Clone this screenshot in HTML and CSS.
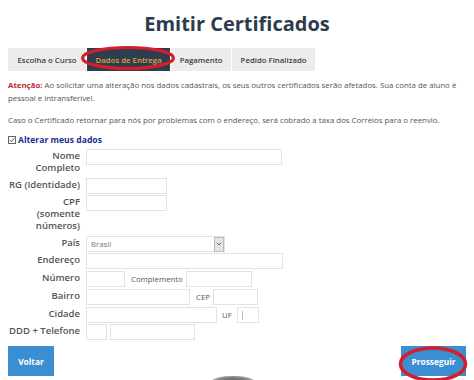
FILE: index.html
```html
<!DOCTYPE html>
<html lang="pt-BR">
<head>
<meta charset="utf-8">
<title>Emitir Certificados</title>
<link rel="stylesheet" href="styles.css">
</head>
<body>
<div class="page">
  <h1 class="title">Emitir Certificados</h1>
  <nav class="tabs">
    <span class="tab">Escolha o Curso</span>
    <span class="tab active">Dados de Entrega</span>
    <span class="tab">Pagamento</span>
    <span class="tab">Pedido Finalizado</span>
  </nav>
  <p class="note"><strong class="warn">Atenção:</strong> Ao solicitar uma alteração nos dados cadastrais, os seus outros certificados serão afetados. Sua conta de aluno é pessoal e intransferível.</p>
  <p class="note">Caso o Certificado retornar para nós por problemas com o endereço, será cobrado a taxa dos Correios para o reenvio.</p>
  <div class="toggle">
    <svg class="check" width="8" height="8" viewBox="0 0 8 8"><rect x="0.5" y="0.5" width="7" height="7" fill="#fff" stroke="#666" stroke-width="1"/><path d="M1.8 4.2 L3.3 5.7 L6.3 2.2" fill="none" stroke="#444" stroke-width="1"/></svg>
    <span>Alterar meus dados</span>
  </div>
  <form class="form">
    <div class="row"><label class="lbl">Nome<br>Completo</label><input class="in w-nome"></div>
    <div class="row"><label class="lbl">RG (Identidade)</label><input class="in w-rg"></div>
    <div class="row"><label class="lbl">CPF<br>(somente<br>números)</label><input class="in w-rg"></div>
    <div class="row"><label class="lbl">País</label><div class="select"><span>Brasil</span><span class="arrow"><svg width="6" height="4" viewBox="0 0 6 4"><path d="M0.8 0.8 L3 3 L5.2 0.8" fill="none" stroke="#555" stroke-width="0.9"/></svg></span></div></div>
    <div class="row r18"><label class="lbl">Endereço</label><input class="in w-end"></div>
    <div class="row r18"><label class="lbl">Número</label><input class="in w-num"><span class="sub">Complemento</span><input class="in w-comp"></div>
    <div class="row r18"><label class="lbl">Bairro</label><input class="in w-bairro"><span class="sub">CEP</span><input class="in w-cep"></div>
    <div class="row"><label class="lbl">Cidade</label><input class="in w-cid"><span class="sub sub-uf">UF</span><span class="in w-uf caret"></span></div>
    <div class="row"><label class="lbl">DDD + Telefone</label><input class="in w-ddd"><input class="in w-tel"></div>
  </form>
  <div class="actions">
    <button class="btn btn-back" type="button">Voltar</button>
    <button class="btn btn-next" type="button">Prosseguir</button>
  </div>
</div>
<svg class="mark mark-tab" width="100" height="30" viewBox="0 0 100 30"><ellipse cx="48" cy="14" rx="45.5" ry="10.5" fill="none" stroke="#d41f2a" stroke-width="3.2"/></svg>
<svg class="mark mark-btn" width="80" height="44" viewBox="0 0 80 44"><ellipse cx="35" cy="20" rx="32.5" ry="16" fill="none" stroke="#d41f2a" stroke-width="3.6"/></svg>
<div class="shade"></div>
</body>
</html>
```
FILE: styles.css
```css
* { box-sizing: border-box; }
html, body { margin: 0; padding: 0; background: #fff; }
body {
  font-family: "Open Sans", "DejaVu Sans", sans-serif;
  color: #555;
  width: 474px;
  height: 380px;
  overflow: hidden;
  position: relative;
}
.page { padding: 12px 8px 0 8px; }
.title {
  margin: 0;
  text-align: center;
  font-size: 20px;
  line-height: 24px;
  font-weight: 700;
  color: #2d3b4c;
}
.tabs {
  display: flex;
  margin-top: 12px;
  height: 23px;
}
.tab {
  display: flex;
  align-items: center;
  padding: 0 8.5px;
  background: #ececec;
  border-right: 1px solid #fff;
  font-size: 7.8px;
  font-weight: 600;
  color: #3d3d3d;
  white-space: nowrap;
}
.tab:first-child { padding: 0 9.5px; }
.tab.active { background: #2f3d4e; color: #dba445; }
.note {
  margin: 8px 0 9px;
  font-size: 7.85px;
  line-height: 13px;
  color: #555;
}
.note + .note { margin: 0; }
.warn { color: #c0282d; font-weight: 700; }
.toggle {
  display: flex;
  align-items: center;
  gap: 2px;
  margin-top: 6px;
  height: 13px;
  font-size: 8.6px;
  font-weight: 700;
  color: #1e2d8f;
}
.form { margin-top: 3px; display: flex; flex-direction: column; }
.row {
  display: flex;
  align-items: flex-start;
  min-height: 17px;
}
.r18 { min-height: 18px; }
.lbl {
  flex: 0 0 72px;
  width: 72px;
  margin-right: 6px;
  text-align: right;
  font-size: 9.5px;
  line-height: 12px;
  font-weight: 600;
  color: #555;
  padding: 1px 0 4px;
  white-space: nowrap;
}
.in {
  display: block;
  flex: none;
  height: 16px;
  border: 1px solid #e2e2e2;
  background: #fff;
  padding: 0;
  margin: 0;
  font: inherit;
}
.w-nome { width: 196px; }
.w-rg { width: 81px; }
.w-end { width: 197px; }
.w-num { width: 39px; }
.w-comp { width: 66px; }
.w-bairro { width: 104px; }
.w-cep { width: 45px; }
.w-cid { width: 131px; }
.w-uf { width: 22px; }
.w-ddd { width: 21px; margin-right: 3px; }
.w-tel { width: 85px; }
.sub {
  font-size: 7.8px;
  line-height: 16px;
  color: #555;
  padding: 0 3px 0 6px;
}
.sub-uf { padding: 0 5px 0 5px; }
.caret { position: relative; }
.caret::before {
  content: "";
  position: absolute;
  left: 4px;
  top: 3px;
  width: 1px;
  height: 9px;
  background: #bbb;
}
.select {
  display: flex;
  align-items: center;
  justify-content: space-between;
  width: 139px;
  height: 16px;
  border: 1px solid #e2e2e2;
  font-size: 7.8px;
  color: #777;
  padding-left: 4px;
}
.arrow {
  display: flex;
  align-items: center;
  justify-content: center;
  width: 10px;
  height: 15px;
  background: #e4e4e4;
  border: 1px solid #bbb;
}
.actions {
  display: flex;
  justify-content: space-between;
  margin-top: 5px;
}
.btn {
  height: 30px;
  border: 0;
  background: #3b8ed1;
  color: #fff;
  font-family: "Open Sans", "DejaVu Sans", sans-serif;
  font-size: 8.4px;
  font-weight: 700;
  padding: 0;
}
.btn-back { width: 46px; }
.btn-next { width: 65px; }
.mark { position: absolute; pointer-events: none; }
.mark-tab { left: 80px; top: 44px; }
.mark-btn { left: 398px; top: 344px; }
.shade {
  position: absolute;
  left: 212px;
  top: 376px;
  width: 42px;
  height: 10px;
  border-radius: 50% 50% 0 0;
  background: radial-gradient(ellipse at 50% 100%, #555 0%, #777 55%, #aaa 80%, rgba(255,255,255,0) 100%);
}
```
